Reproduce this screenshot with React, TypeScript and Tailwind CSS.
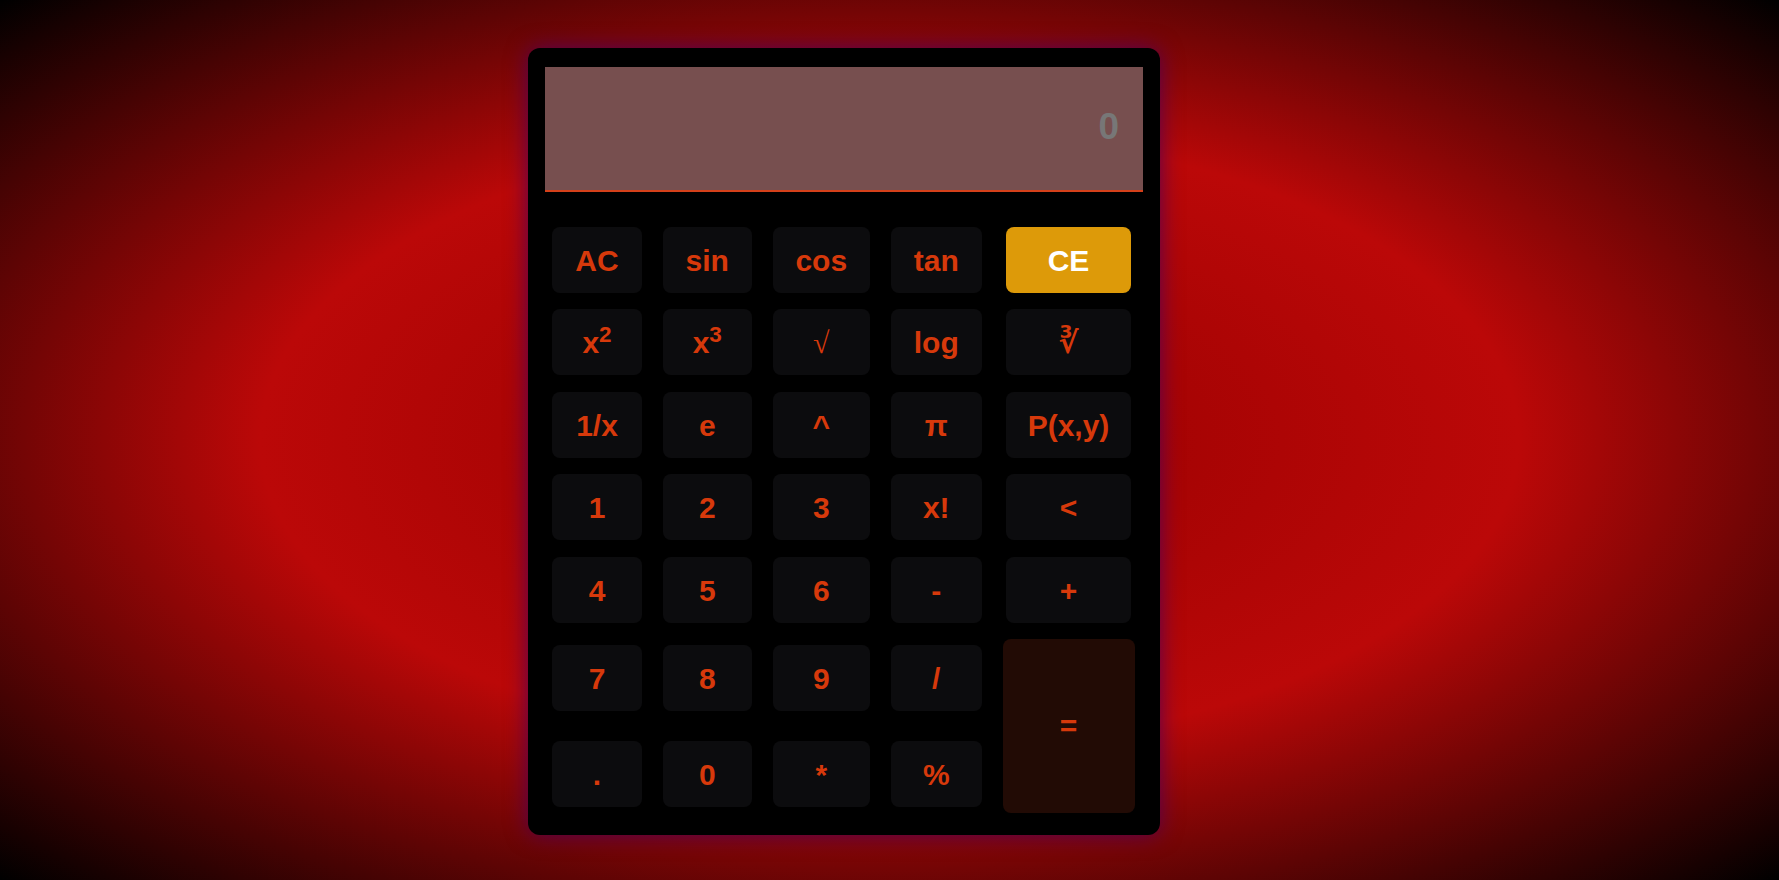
import { ReactNode } from "react";

type Key = { label: ReactNode; kind?: "gold" | "equals"; thin?: boolean };

const rows: Key[][] = [
  [{ label: "AC" }, { label: "sin" }, { label: "cos" }, { label: "tan" }, { label: "CE", kind: "gold" }],
  [
    { label: <>x<sup>2</sup></> },
    { label: <>x<sup>3</sup></> },
    { label: "√", thin: true },
    { label: "log" },
    { label: "∛" },
  ],
  [{ label: "1/x" }, { label: "e" }, { label: "^" }, { label: "π" }, { label: "P(x,y)" }],
  [{ label: "1" }, { label: "2" }, { label: "3" }, { label: "x!" }, { label: "<" }],
  [{ label: "4" }, { label: "5" }, { label: "6" }, { label: "-" }, { label: "+" }],
  [{ label: "7" }, { label: "8" }, { label: "9" }, { label: "/" }, { label: "=", kind: "equals" }],
  [{ label: "." }, { label: "0" }, { label: "*" }, { label: "%" }],
];

function clsx(...parts: (string | false)[]) {
  return parts.filter(Boolean).join(" ");
}

function CalcButton({ k, last }: { k: Key; last: boolean }) {
  if (k.kind === "equals") {
    return (
      <button className="row-span-2 w-full h-full rounded-lg bg-[#220b05] text-[#d7390b] text-3xl font-bold">
        {k.label}
      </button>
    );
  }
  const gold = k.kind === "gold";
  return (
    <button
      className={clsx(
        "self-center h-[66px] rounded-lg text-3xl pt-[2px]",
        last ? "justify-self-center w-[125px]" : "w-full",
        gold ? "bg-[#dd9a09] text-white" : "bg-[#0c0c0e] text-[#d7390b]",
        k.thin ? "font-normal font-['Liberation_Serif',serif]" : "font-bold"
      )}
    >
      {k.label}
    </button>
  );
}

export default function App() {
  return (
    <div className="min-h-screen w-full bg-[radial-gradient(ellipse_at_center,#960000_0%,#bb0808_50%,#000_100%)] font-['Liberation_Sans','DejaVu_Sans',sans-serif]">
      <div className="flex justify-center pt-[48px]">
        <div className="mr-[91px] w-[632px] rounded-xl bg-black px-[17px] pt-[19px] pb-[22px] shadow-[0_0_22px_rgba(80,0,90,0.95)]">
          <div className="flex h-[125px] items-center justify-end border-b-2 border-[#d4401a] bg-[#774f4f] pr-[24px] pb-[4px]">
            <span className="text-[37px] font-bold text-[#777777]">0</span>
          </div>

          <div className="mt-[35px] ml-[7px] grid grid-cols-[90px_88.5px_97.5px_90.5px_132px] grid-rows-[66px_66px_66px_66px_66px_79px_79px] gap-x-[21px] gap-y-[16.4px]">
            {rows.map((row, r) =>
              row.map((k, c) => <CalcButton key={`${r}-${c}`} k={k} last={c === 4} />)
            )}
          </div>
        </div>
      </div>
    </div>
  );
}
